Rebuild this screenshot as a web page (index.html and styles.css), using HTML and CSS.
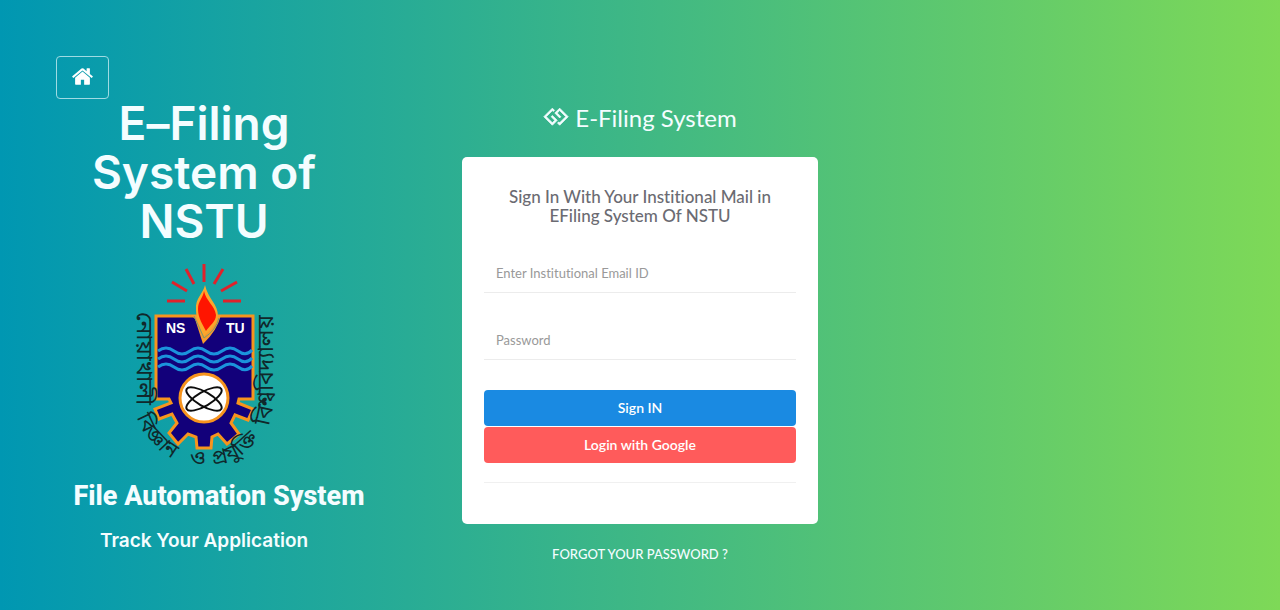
FILE: index.html
```html
<!doctype html>
<html lang="en">
  <head>
    <meta charset="UTF-8" />
    <meta name="viewport" content="width=device-width, initial-scale=1.0" />
    <title>E-Filing System</title>
    <link rel="stylesheet" href="styles.css">
  </head>
  <body>
    <div class="page">
      <!-- Branding -->
      <aside class="brand">
        <a class="home-button" href="#" aria-label="Home">
          <svg viewBox="0 0 1792 1792" width="23" height="23" fill="currentColor">
            <path d="M1472 992v480q0 26-19 45t-45 19h-384v-384h-256v384h-384q-26 0-45-19t-19-45v-480q0-1 .5-3t.5-3l575-474 575 474q1 2 1 6zm223-69l-62 74q-8 9-21 11h-3q-13 0-21-7l-692-577-692 577q-12 8-24 7-13-2-21-11l-62-74q-8-10-7-23.500t11-21.500l719-599q32-26 76-26t76 26l244 204v-195q0-14 9-23t23-9h192q14 0 23 9t9 23v408l219 182q10 8 11 21.500t-7 23.500z" />
          </svg>
        </a>
        <h1 class="brand-title">E&ndash;Filing System of NSTU</h1>

        <svg class="crest" viewBox="-1 0 160 220" width="160" height="220" role="img" aria-label="NSTU crest">
          <!-- rays -->
          <path class="crest-rays" d="M79 9V27M61 14L69 29M98 14L89 29M47 27L62 36M112 27L96 36M42 46H60M98 46H116" />
          <!-- shield and gear -->
          <path class="crest-shield" d="M31 61H128V144H114L113 148L128 154L123 165L110 160L106 168L114 179L102 189L93 179L87 182L86 193H72L71 182L63 179L53 189L44 178L52 168L47 159L34 164L30 154L46 148L44 144H31Z" />
          <!-- waves -->
          <g class="crest-waves">
            <path d="M33 96q8-6 16 0t16 0 16 0 16 0 16 0 14-1" />
            <path d="M33 104q8-6 16 0t16 0 16 0 16 0 16 0 14-1" />
            <path d="M33 112q8-6 16 0t16 0 16 0 16 0 16 0 14-1" />
          </g>
          <!-- torch -->
          <path class="crest-notch" d="M66 60L70 64L78 89Q92 76 96 60Z" />
          <path class="crest-flame-edge" d="M80 30C78 39 70 43 71 55C71 65 76 75 79 81C83 77 92 70 93 61C93 49 83 44 80 30Z" />
          <path class="crest-flame" d="M79 36C78 43 73 46 73 54C73 63 78 70 81 76C84 71 91 67 91 60C90 51 81 46 79 36Z" />
          <path class="crest-notch-line" d="M69 61L79 83Q91 75 94 63" />
          <!-- atom -->
          <circle class="crest-hub" cx="79" cy="143" r="24" />
          <g class="crest-atom">
            <ellipse cx="79" cy="144" rx="20" ry="7" transform="rotate(30 79 144)" />
            <ellipse cx="79" cy="144" rx="20" ry="7" transform="rotate(-30 79 144)" />
          </g>
          <text class="crest-initials" x="41" y="78">NS</text>
          <text class="crest-initials" x="101" y="78">TU</text>
          <!-- university name around the shield -->
          <path id="ring-left" fill="none" d="M12 57V160" />
          <path id="ring-lower-left" fill="none" d="M12 162Q22 194 62 211" />
          <path id="ring-lower-right" fill="none" d="M88 210Q120 207 142 172" />
          <path id="ring-right" fill="none" d="M143 171Q148 160 148 140V40" />
          <text class="crest-name"><textPath href="#ring-left">নোয়াখালী</textPath></text>
          <text class="crest-name crest-name-small"><textPath href="#ring-lower-left">বিজ্ঞান</textPath></text>
          <text class="crest-name crest-name-small" x="65" y="210">ও</text>
          <text class="crest-name crest-name-small"><textPath href="#ring-lower-right">প্রযুক্তি</textPath></text>
          <text class="crest-name"><textPath href="#ring-right">বিশ্ববিদ্যালয়</textPath></text>
        </svg>

        <h2 class="brand-subtitle">File Automation System</h2>
        <p class="brand-tagline">Track Your Application</p>
      </aside>

      <!-- Sign in -->
      <main class="login">
        <div class="login-logo">
          <svg class="login-logo-icon" viewBox="0 0 2048 1792" width="26" height="23">
            <path d="M736 736l384 384-384 384-672-672 672-672 168 168-96 96-72-72-480 480 480 480 193-193-289-287zm576-576l672 672-672 672-168-168 96-96 72 72 480-480-480-480-193 193 289 287-96 96-384-384z" />
          </svg>
          <span>E-Filing System</span>
        </div>

        <form class="login-card">
          <h3 class="login-heading">Sign In With Your Institional Mail in EFiling System Of NSTU</h3>
          <input class="login-input" type="email" placeholder="Enter Institutional Email ID" aria-label="Enter Institutional Email ID" />
          <input class="login-input" type="password" placeholder="Password" aria-label="Password" />
          <div class="login-actions">
            <button class="btn btn-primary" type="submit">Sign IN</button>
            <button class="btn btn-google" type="button">Login with Google</button>
          </div>
          <hr class="login-divider" />
        </form>

        <a class="forgot-link" href="#">FORGOT YOUR PASSWORD ?</a>
      </main>
    </div>
  </body>
</html>
```
FILE: styles.css
```css
* {
  box-sizing: border-box;
}

body {
  margin: 0;
  min-height: 100vh;
  background: linear-gradient(90deg, #0097b2, #7ed957);
  color: #f4fdff;
  font-family: Lato, "Open Sans", sans-serif;
  font-variant-ligatures: none;
}

h1,
h2,
h3,
p {
  margin: 0;
}

.page {
  display: grid;
  grid-template-columns: 1fr 356px 1fr;
}

/* Branding */
.brand {
  display: flex;
  flex-direction: column;
  align-items: center;
  width: 296px;
  margin: 56px 0 0 56px;
  font-family: Inter, sans-serif;
  text-align: center;
}

.home-button {
  display: flex;
  align-items: center;
  justify-content: center;
  align-self: flex-start;
  width: 53px;
  height: 43px;
  padding-bottom: 3px;
  border: 1px solid #9fdbe3;
  border-radius: 4px;
  color: #fff;
}

.brand-title {
  max-width: 240px;
  font-size: 46px;
  font-weight: 600;
  line-height: 49px;
}

.crest {
  margin-top: 9px;
}

.crest-rays {
  stroke: #e0222b;
  stroke-width: 3;
}

.crest-shield {
  fill: #12007a;
  stroke: #f7941d;
  stroke-width: 3;
}

.crest-waves {
  fill: none;
  stroke: #1b93dc;
  stroke-width: 3;
}

.crest-notch {
  fill: #f79a2d;
}

.crest-flame-edge {
  fill: #fba62c;
}

.crest-flame {
  fill: #ff1500;
}

.crest-notch-line {
  fill: none;
  stroke: #7e9a6a;
  stroke-width: 1;
}

.crest-hub {
  fill: #fff;
  stroke: #f7941d;
  stroke-width: 3;
}

.crest-atom {
  fill: none;
  stroke: #0c0c0c;
  stroke-width: 2;
}

.crest-initials {
  fill: #fff;
  font-family: "Liberation Sans", sans-serif;
  font-size: 14px;
  font-weight: 700;
}

.crest-name {
  fill: #10282b;
  font-family: "Noto Sans Bengali", "Noto Sans", sans-serif;
  font-size: 23px;
}

.crest-name-small {
  font-size: 21px;
}

.brand-subtitle {
  margin-left: 30px;
  font-family: Roboto, sans-serif;
  font-size: 27px;
  font-weight: 800;
  line-height: 42px;
  white-space: nowrap;
}

.brand-tagline {
  margin-top: 12px;
  font-size: 19px;
  font-weight: 600;
  line-height: 24px;
}

/* Sign in */
.login {
  display: flex;
  flex-direction: column;
  align-items: center;
  padding-top: 102px;
}

.login-logo {
  display: flex;
  align-items: center;
  gap: 6px;
  font-size: 24px;
  line-height: 31px;
}

.login-logo-icon {
  fill: currentColor;
  stroke: currentColor;
  stroke-width: 60;
}

.login-card {
  display: flex;
  flex-direction: column;
  width: 100%;
  margin-top: 24px;
  padding: 30px 22px 41px;
  background: #fff;
  border-radius: 5px;
}

.login-heading {
  margin-bottom: 1px;
  color: #6b6b72;
  font-size: 17px;
  font-weight: 500;
  line-height: 19px;
  text-align: center;
}

.login-input {
  height: 40px;
  margin-top: 27px;
  padding: 0 12px;
  border: 0;
  border-bottom: 1px solid #ececec;
  background: transparent;
  color: #555;
  font-family: inherit;
  font-size: 13px;
  font-variant-ligatures: none;
}

.login-input::placeholder {
  color: #999;
}

.login-actions {
  display: flex;
  flex-direction: column;
  gap: 1px;
  margin-top: 30px;
}

.btn {
  height: 36px;
  padding: 0 12px 2px;
  border: 0;
  border-radius: 4px;
  color: #fff;
  font-family: inherit;
  font-size: 14px;
  font-weight: 600;
  cursor: pointer;
}

.btn-primary {
  background: #1a8ae2;
}

.btn-google {
  background: #ff5b5b;
}

.login-divider {
  width: 100%;
  margin: 19px 0 0;
  border: 0;
  border-top: 1px solid #f0f0f0;
}

.forgot-link {
  margin-top: 20px;
  color: #f4fdff;
  font-size: 13px;
  font-weight: 500;
  line-height: 20px;
  text-decoration: none;
}
```
